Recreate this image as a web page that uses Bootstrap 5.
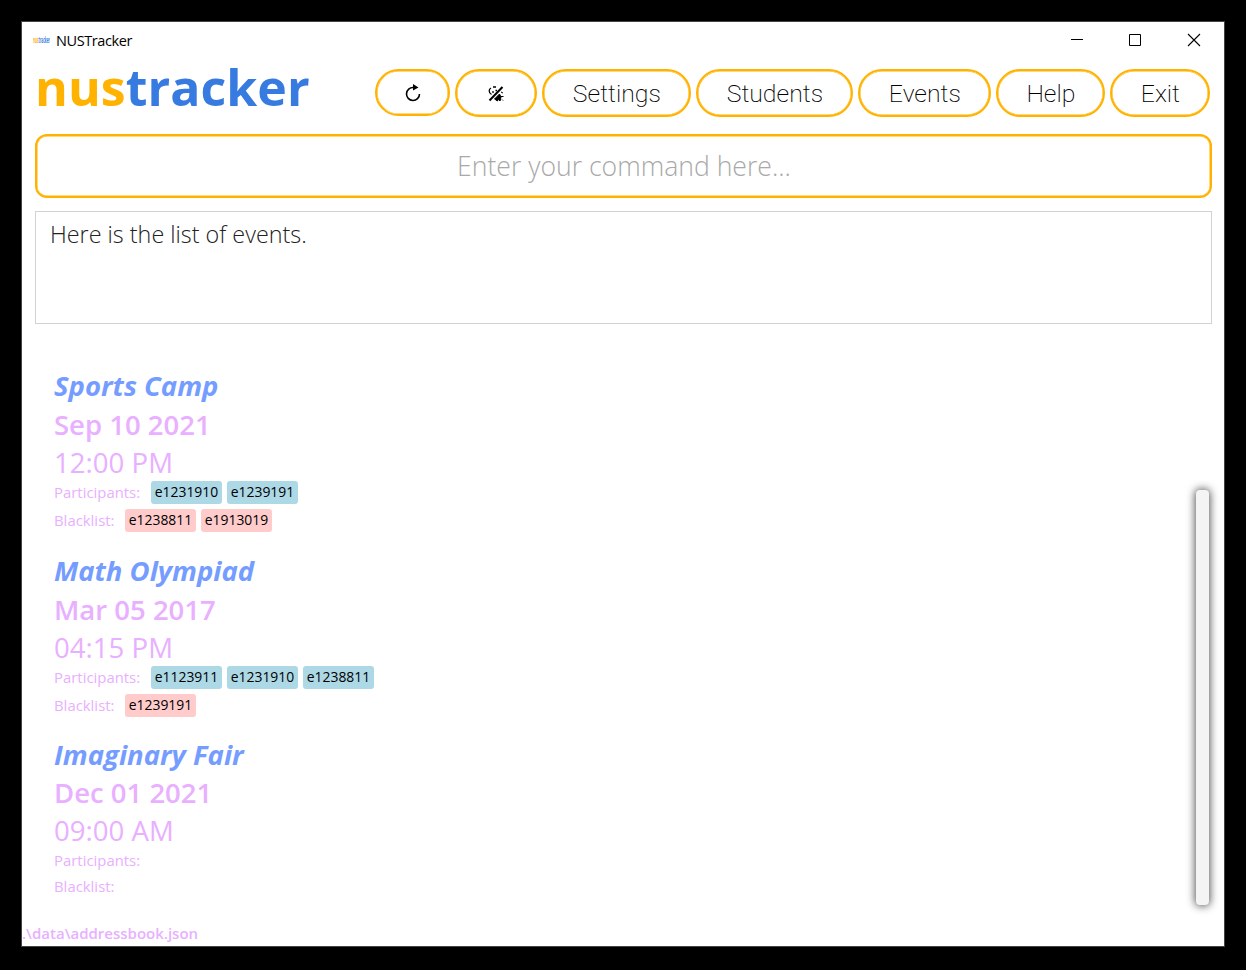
<!DOCTYPE html>
<html lang="en">
<head>
<meta charset="utf-8">
<title>NUSTracker</title>
<link href="https://cdn.jsdelivr.net/npm/bootstrap@5.3.0/dist/css/bootstrap.min.css" rel="stylesheet">
<style>
:root{--gold:#ffb300;--lilac:#e8b0ff}
body{background:#000;font-family:"Open Sans",sans-serif;padding:22px 22px 24px;height:970px;overflow:hidden;line-height:normal}
.window{width:1202px;height:924px;background:#fff;outline:1px solid #444;overflow:hidden}
.titlebar{height:37px;padding:0 23px 1px 11px;font-size:15px;color:#000}
.titlebar .app-icon{width:17px;margin-right:6px}
.win-title{font-size:14.5px;letter-spacing:-.4px}
.controls{gap:43px}
.header{height:75px;padding:0 14px 0 13px}
.brand{font-size:50px;font-weight:700;line-height:56px;letter-spacing:.05px;color:#377be0}
.brand span{color:var(--gold)}
.menu{gap:5px;padding-top:10px;margin-right:-.4px}
.pill{border:2px solid var(--gold);box-shadow:inset 0 0 0 .5px var(--gold);border-radius:24px;height:48px;padding:1px 0 0;background:#fff;font:200 24.8px/44px Roboto,sans-serif;color:#000;text-align:center}
.command{margin:0 12px 0 13px;width:1177px;height:64px;border:2px solid var(--gold);box-shadow:inset 0 0 0 .5px var(--gold);border-radius:12px;font-size:26.6px;font-weight:300;text-align:center;color:#333;padding:0 0 1px 1px}
.command::placeholder{color:#a9a9a9;opacity:1}
.result{margin:13px 12px 0 13px;height:113px;border:1px solid #d3d3d3;padding:6px 14px;font-size:23.35px;font-weight:300;color:#222}
.events{height:599px;padding:42px 15px 0 32px}
.event-list{color:var(--lilac)}
.event{height:185px}
.event h2{font-size:27.5px;font-weight:700;font-style:italic;line-height:39px;color:#759cff;margin:0}
.event .date{font-size:27.5px;font-weight:600;line-height:39px}
.event .time{font-size:27.6px;font-weight:400;line-height:37px}
.people{height:23px;margin-bottom:5px;font-size:14.9px;font-weight:400;gap:5px}
.people .who{width:87px;margin-right:5px;line-height:23px}
.people .who.short{width:61px}
.empty h2,.empty .date{line-height:38px}
.empty .people{height:21px}
.id{border-radius:3px;width:71px;height:23px;font-size:13.9px;line-height:22px;color:#000;font-weight:400;text-align:center;background:#add8e6}
.id.blocked{background:#ffcccb}
.scroll-thumb{width:13px;height:415px;border-radius:4px;background:#f4f4f4;box-shadow:0 0 9px 1px #555;margin-top:124px}
.status{color:var(--lilac);font-size:15px;font-weight:600;line-height:20px}
</style>
</head>
<body>
<main class="window d-flex flex-column">
  <div class="titlebar d-flex align-items-center justify-content-between">
    <div class="d-flex align-items-center">
      <svg class="app-icon" width="17" height="14" viewBox="0 0 17 14"><text transform="scale(.345 1)" x="0" y="10" font-size="9" font-weight="700" fill="#ffb300">nus<tspan fill="#377be0">tracker</tspan></text></svg>
      <span class="win-title">NUSTracker</span>
    </div>
    <div class="controls d-flex align-items-center">
      <svg width="16" height="14" viewBox="0 0 16 14"><path d="M2 6.500h12" stroke="#000"/></svg>
      <svg width="16" height="14" viewBox="0 0 16 14"><path d="M1.500 1.500h11v11h-11z" fill="none" stroke="#000"/></svg>
      <svg width="14" height="14" viewBox="0 0 14 14"><path d="M1 1l12 12M13 1L1 13" stroke="#000" stroke-width="1.100"/></svg>
    </div>
  </div>
  <header class="header d-flex justify-content-between align-items-start">
    <div class="brand"><span>nus</span>tracker</div>
    <nav class="menu d-flex">
      <button class="pill" style="width:75px;height:47px"><svg class="d-block mx-auto" width="18" height="20" viewBox="0 0 18 20"><path d="M9.500 4.500A6.500 6.500 0 1 0 15.500 11" fill="none" stroke="#000" stroke-width="1.600"/><path d="M9 1l5.500 3.500L9 7.500z"/></svg></button>
      <button class="pill" style="width:82px"><svg class="d-block mx-auto" width="18" height="18" viewBox="0 0 18 18"><path d="M2.500 15.500L15.500 2" stroke="#000" stroke-width="2"/><path d="M4.500 9.500C1.500 8 1.500 4 4 3M6 2h3M6 6v2M8.500 5.500h1.500" fill="none" stroke="#000" stroke-width="1.300"/><path d="M7.500 14l5-5 1.500 3-1 4-1.500-2-1 2zM14 7l2 1M14 11.500h2.500M15 14.500l1 1" stroke="#000"/></svg></button>
      <button class="pill" style="width:149px">Settings</button>
      <button class="pill" style="width:157px">Students</button>
      <button class="pill" style="width:133px">Events</button>
      <button class="pill" style="width:109px">Help</button>
      <button class="pill" style="width:100px">Exit</button>
    </nav>
  </header>
  <input class="command" placeholder="Enter your command here..." aria-label="Command">
  <section class="result">Here is the list of events.</section>
  <section class="events d-flex justify-content-between">
    <div class="event-list">
      <article class="event">
        <h2>Sports Camp</h2><div class="date">Sep 10 2021</div><div class="time">12:00 PM</div>
        <div class="people d-flex"><span class="who">Participants:</span><span class="id">e1231910</span><span class="id">e1239191</span></div>
        <div class="people d-flex"><span class="who short">Blacklist:</span><span class="id blocked">e1238811</span><span class="id blocked">e1913019</span></div>
      </article>
      <article class="event">
        <h2>Math Olympiad</h2><div class="date">Mar 05 2017</div><div class="time">04:15 PM</div>
        <div class="people d-flex"><span class="who">Participants:</span><span class="id">e1123911</span><span class="id">e1231910</span><span class="id">e1238811</span></div>
        <div class="people d-flex"><span class="who short">Blacklist:</span><span class="id blocked">e1239191</span></div>
      </article>
      <article class="event empty">
        <h2>Imaginary Fair</h2><div class="date">Dec 01 2021</div><div class="time">09:00 AM</div>
        <div class="people d-flex"><span class="who">Participants:</span></div>
        <div class="people d-flex"><span class="who short">Blacklist:</span></div>
      </article>
    </div>
    <div class="scroll-thumb"></div>
  </section>
  <footer class="status">.\data\addressbook.json</footer>
</main>
<script src="https://cdn.jsdelivr.net/npm/bootstrap@5.3.0/dist/js/bootstrap.bundle.min.js"></script>
</body>
</html>
